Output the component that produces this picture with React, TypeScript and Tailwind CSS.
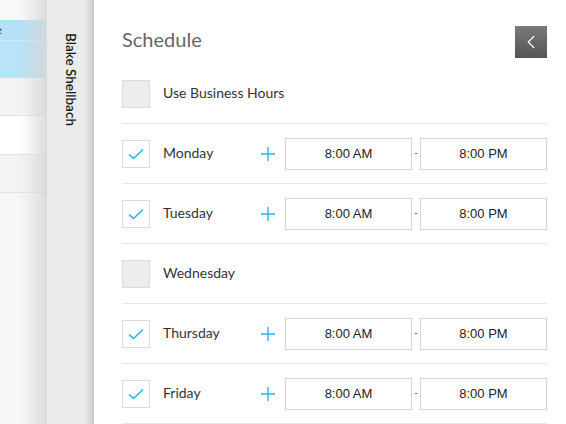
import { ChevronLeft } from 'lucide-react';

interface Day {
  name: string;
  on: boolean;
}

const days: Day[] = [
  { name: 'Monday', on: true },
  { name: 'Tuesday', on: true },
  { name: 'Wednesday', on: false },
  { name: 'Thursday', on: true },
  { name: 'Friday', on: true },
];

function Box({ on }: { on: boolean }) {
  return (
    <div
      className={`flex h-[28px] w-[28px] shrink-0 items-center justify-center border border-[#dcdcdc] ${
        on ? 'bg-white' : 'bg-[#eceeef]'
      }`}
    >
      {on && (
        <svg width="16" height="12" viewBox="0 0 16 12" fill="none">
          <path d="M1 6.5l4.5 4L15 1.5" stroke="#1fb5e3" strokeWidth="1.6" />
        </svg>
      )}
    </div>
  );
}

function TimeField({ value }: { value: string }) {
  return (
    <div className="flex h-[32px] w-[127px] items-center justify-center border border-[#d6d6d6] bg-white text-[13px] text-[#222] font-['Liberation_Sans',Arial,sans-serif]">
      {value}
    </div>
  );
}

export default function App() {
  return (
    <div className="flex h-[424px] w-[566px] overflow-hidden bg-white font-['Lato','Open_Sans',sans-serif]">
      {/* list behind */}
      <div className="relative flex w-[46px] shrink-0 flex-col bg-[#f1f1f1]">
        <div className="h-[20px] bg-[#f8f8f8]" />
        <div className="flex h-[21px] items-center border-b border-[#cfe9f6] bg-[#b5e1f6] text-[11px] text-[#333]">
          <span className="-ml-[4px]">e</span>
        </div>
        <div className="h-[37px] bg-[#b9e3f7]" />
        <div className="h-[38px] border-b border-[#e2e2e2] bg-[#f3f3f3]" />
        <div className="h-[39px] border-b border-[#e2e2e2] bg-white" />
        <div className="h-[38px] border-b border-[#e2e2e2] bg-[#f3f3f3]" />
        <div className="flex-1 bg-[#f6f6f6]" />
        <div className="pointer-events-none absolute inset-y-0 right-0 w-[26px] bg-gradient-to-r from-transparent to-[#d6d6d6]/80" />
      </div>

      {/* name strip */}
      <div className="relative flex w-[47px] shrink-0 justify-center border-l border-[#dadada] bg-[#ebebeb] pt-[33px]">
        <span className="text-[13.5px] font-semibold leading-none text-[#1a1a1a] [writing-mode:vertical-rl]">Blake Shellbach</span>
        <div className="pointer-events-none absolute inset-y-0 right-0 w-[8px] bg-gradient-to-r from-transparent to-[#cfcfcf]" />
      </div>

      {/* schedule panel */}
      <div className="flex flex-1 flex-col border-l border-[#c8c8c8] pl-[28px] pr-[20px] pt-[26px]">
        <div className="flex h-[32px] shrink-0 items-center justify-between">
          <h1 className="-mt-[7px] text-[20px] text-[#666]">Schedule</h1>
          <button className="flex h-[32px] w-[32px] items-center justify-center bg-gradient-to-b from-[#7a7a7a] to-[#555] text-white">
            <ChevronLeft size={22} strokeWidth={1.3} />
          </button>
        </div>

        <div className="mt-[6px] flex h-[60px] shrink-0 items-center border-b border-[#e6e6e6]">
          <Box on={false} />
          <span className="-mt-[2px] ml-[13px] text-[14px] text-[#333]">Use Business Hours</span>
        </div>

        {days.map((d) => (
          <div key={d.name} className="flex h-[60px] shrink-0 items-center border-b border-[#e6e6e6]">
            <Box on={d.on} />
            <span className="-mt-[2px] ml-[13px] w-[98px] text-[14px] text-[#333]">{d.name}</span>
            {d.on && (
              <div className="flex items-center">
                <svg width="14" height="14" viewBox="0 0 14 14" className="mr-[10px]">
                  <path d="M7 0v14M0 7h14" stroke="#2bb6e2" strokeWidth="1.4" />
                </svg>
                <TimeField value="8:00 AM" />
                <span className="w-[8px] text-center text-[11px] text-[#666]">-</span>
                <TimeField value="8:00 PM" />
              </div>
            )}
          </div>
        ))}
      </div>
    </div>
  );
}
